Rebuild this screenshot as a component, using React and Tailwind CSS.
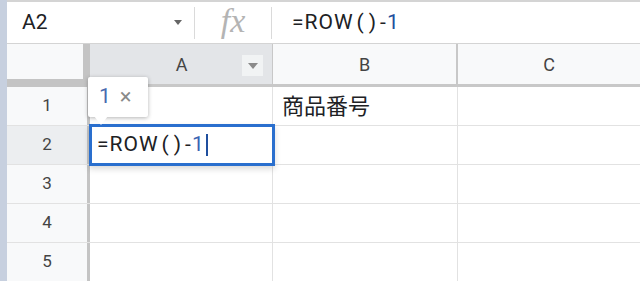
import React from "react";

const font = { fontFamily: "Roboto, 'Noto Sans CJK JP', sans-serif" };

function Triangle({ className }) {
  return (
    <svg width="10" height="6" viewBox="0 0 10 6" className={className}>
      <path d="M0 0 L10 0 L5 6 Z" fill="currentColor" />
    </svg>
  );
}

function Formula({ oneColor }) {
  return (
    <>
      =ROW<span className="pl-[3px] pr-[2px]">(</span><span className="pl-[2px] pr-[3px]">)</span>-<span className={oneColor}>1</span>
    </>
  );
}

function Row({ n, children, selected }) {
  return (
    <div className="flex h-[39px] border-b border-[#e2e2e2]">
      <div className={`w-[83px] shrink-0 border-r-[3px] border-[#c4c4c4] flex items-center justify-center text-[17px] text-[#444] ${selected ? "bg-[#eceef0]" : "bg-[#f8f9fa]"}`}>
        {n}
      </div>
      {children || (
        <>
          <div className="w-[183px] shrink-0 border-r border-[#e2e2e2]" />
          <div className="w-[185px] shrink-0 border-r border-[#e2e2e2]" />
          <div className="flex-1" />
        </>
      )}
    </div>
  );
}

export default function App() {
  return (
    <div className="flex w-[640px] h-[281px] overflow-hidden bg-white" style={font}>
      <div className="w-[7px] shrink-0 bg-[#c7d0df]" />
      <div className="flex-1 flex flex-col min-w-0">
        {/* formula bar */}
        <div className="h-[44px] shrink-0 flex items-center border-t-2 border-b border-[#d4d4d4] bg-white">
          <div className="w-[187px] shrink-0 flex items-center pl-[15px] pr-[12px]">
            <span className="text-[21px] text-[#202124]">A2</span>
            <Triangle className="ml-auto text-[#666] w-[8px] h-[5px]" />
          </div>
          <div className="w-px h-[32px] bg-[#dadada]" />
          <div className="w-[76px] shrink-0 flex items-center justify-center">
            <span className="text-[34px] italic text-[#b4b4b4] leading-none -mt-[4px]" style={{ fontFamily: "'Liberation Serif', serif" }}>fx</span>
          </div>
          <div className="w-px h-[32px] bg-[#dadada]" />
          <div className="pl-[20px] text-[21px] text-[#202124] tracking-[1px]">
            <Formula oneColor="text-[#1f4f9e]" />
          </div>
        </div>

        {/* column headers */}
        <div className="flex h-[43px] shrink-0">
          <div className="w-[83px] shrink-0 bg-[#f8f9fa] border-r-[7px] border-b-[8px] border-[#c4c4c4]" />
          <div className="w-[183px] shrink-0 bg-[#e3e5e8] border-r border-b-[3px] border-[#c8c8c8] flex items-center relative">
            <span className="flex-1 text-center text-[18px] text-[#444] pl-[1px]">A</span>
            <div className="absolute right-[9px] top-[11px] w-[21px] h-[21px] bg-[#f1f3f4] flex items-center justify-center">
              <Triangle className="text-[#8a8a8a]" />
            </div>
          </div>
          <div className="w-[185px] shrink-0 bg-[#f8f9fa] border-r-2 border-b-[3px] border-[#c8c8c8] flex items-center justify-center text-[18px] text-[#444]">B</div>
          <div className="flex-1 bg-[#f8f9fa] border-b-[3px] border-[#c8c8c8] flex items-center justify-center text-[18px] text-[#444]">C</div>
        </div>

        {/* rows */}
        <div className="relative">
          <Row n={1}>
            <div className="w-[183px] shrink-0 border-r border-[#e2e2e2]" />
            <div className="w-[185px] shrink-0 border-r border-[#e2e2e2] flex items-center pl-[9px] text-[22px] text-[#202124]">商品番号</div>
            <div className="flex-1" />
          </Row>
          <Row n={2} selected>
            <div className="w-[183px] shrink-0 border-r border-[#e2e2e2] relative">
              <div className="absolute -left-[1px] -top-[2px] w-[186px] h-[42px] border-[3px] border-[#2a6fce] bg-white shadow-[0_3px_6px_rgba(0,0,0,0.15)] flex items-center pl-[5px] text-[21px] text-[#202124] tracking-[1px] z-10">
                <Formula oneColor="text-[#3b64b3]" />
                <span className="inline-block w-[2px] h-[22px] bg-[#1f4f9e] ml-[1px]" />
              </div>
            </div>
            <div className="w-[185px] shrink-0 border-r border-[#e2e2e2]" />
            <div className="flex-1" />
          </Row>
          <Row n={3} />
          <Row n={4} />
          <Row n={5} />

          {/* range tooltip */}
          <div className="absolute left-[81px] -top-[10px] z-20">
            <div className="w-[60px] h-[40px] bg-white rounded-[2px] shadow-[0_1px_4px_rgba(0,0,0,0.3)] flex items-center pl-[11px] gap-[9px]">
              <span className="text-[21px] text-[#4a6ab0]">1</span>
              <span className="text-[22px] text-[#8a8a8a] leading-none">×</span>
            </div>
            <div className="absolute left-[6px] top-[39px] w-0 h-0 border-l-[7px] border-r-[7px] border-t-[9px] border-l-transparent border-r-transparent border-t-white" />
          </div>
        </div>
      </div>
    </div>
  );
}
